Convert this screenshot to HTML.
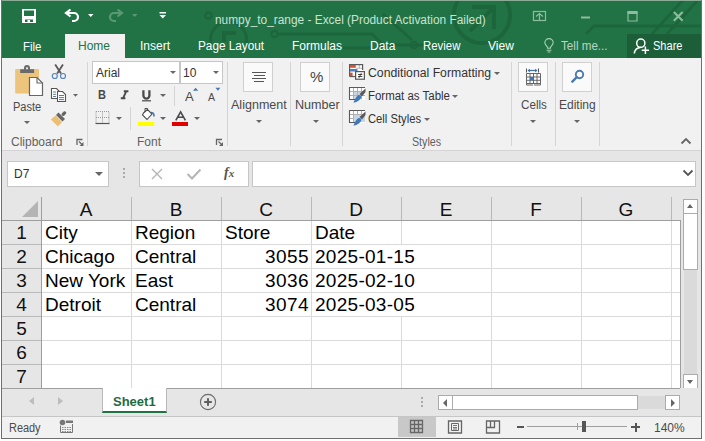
<!DOCTYPE html>
<html><head><meta charset="utf-8">
<style>
*{margin:0;padding:0;box-sizing:border-box}
html,body{width:705px;height:441px;overflow:hidden;background:#fff;font-family:"Liberation Sans",sans-serif;position:relative}
.a{position:absolute}
.tb{position:absolute;color:#fff;font-size:12px;white-space:nowrap;line-height:14px}
.rt{position:absolute;color:#4a4a4a;font-size:12px;white-space:nowrap;line-height:14px}
.sep{position:absolute;width:1px;background:#d4d4d4}
.c{position:absolute;font-size:19px;color:#000;white-space:nowrap;line-height:22px}
.hl{position:absolute;height:1px;background:#dadada}
.vl{position:absolute;width:1px;background:#dadada}
.hd{position:absolute;font-size:19px;color:#111;line-height:22px;text-align:center}
.dd{position:absolute;width:0;height:0;border-left:3px solid transparent;border-right:3px solid transparent;border-top:3px solid #666}
</style></head><body>

<!-- ===== Title bar ===== -->
<div class="a" style="left:1px;top:0;width:701px;height:58px;background:#217346"></div>
<svg class="a" style="left:0;top:0" width="702" height="58" viewBox="0 0 702 58">
  <g fill="none" stroke="#1d663c" stroke-width="3">
    <circle cx="208.5" cy="15.5" r="3.2" stroke-width="2.2"/>
    <path d="M211 44 A18 18 0 1 1 246 44" />
    <path d="M222 33 H236 M224 33 V42" stroke-width="4"/>
    <circle cx="274.5" cy="34" r="3.2" stroke-width="2.2"/>
    <path d="M278 34 H372 L383 45 H455"/>
    <path d="M343 48 H372"/>
    <circle cx="414" cy="45" r="3.2" stroke-width="2.2"/>
    <path d="M383 14 L412 40"/>
    <circle cx="482" cy="15" r="28" stroke-width="4"/>
    <path d="M472 7 H494 V29 M494 7 L470 31" stroke-width="4"/>
    <path d="M586 34 L594 26 H702"/>
    <path d="M652 34 L684 -1"/>
    <path d="M667 34 L699 -1"/>
  </g>
</svg>
<!-- QAT -->
<svg class="a" style="left:0;top:0" width="180" height="30" viewBox="0 0 180 30">
  <path d="M22 9 H36 V23 H22 Z M24 10.5 V16 H34 V10.5 Z M25 19.5 V22 H27.5 V20 H30 V22 H33 V19.5 Z" fill="#fff" fill-rule="evenodd"/>
  <path d="M70.5 9.5 L66 13 L70.5 16.5" fill="none" stroke="#fff" stroke-width="2.2" stroke-linejoin="miter"/>
  <path d="M66.5 13 H74 A4 4 0 0 1 74 21 H72" fill="none" stroke="#fff" stroke-width="2.2"/>
  <path d="M88 14 H93.5 L90.75 17 Z" fill="#fff"/>
  <path d="M117.5 9.5 L122 13 L117.5 16.5" fill="none" stroke="#5b9874" stroke-width="2.2"/>
  <path d="M121.5 13 H114 A4 4 0 0 0 114 21 H116" fill="none" stroke="#5b9874" stroke-width="2.2"/>
  <path d="M132 14 H137.5 L134.75 17 Z" fill="#5b9874"/>
  <path d="M159.5 12 H166 V13.5 H159.5 Z M159.5 15 H166 L162.75 18.5 Z" fill="#fff"/>
</svg>
<div class="tb" style="left:215px;top:12.5px;color:#c9e3d1;transform:scaleX(0.99);transform-origin:left">numpy_to_range - Excel (Product Activation Failed)</div>
<!-- window controls -->
<svg class="a" style="left:520px;top:0" width="181" height="30" viewBox="520 0 181 30">
  <g fill="none" stroke="#8fbc9f" stroke-width="1.2">
    <rect x="533.5" y="11.5" width="12" height="9"/>
    <path d="M536 16.5 L539.5 13.5 L543 16.5 M539.5 14 V20.5"/>
    <path d="M628 12 H637 V21 H628 Z"/>
  </g>
  <path d="M627.5 11 H637.5 V14 H627.5 Z" fill="#8fbc9f"/>
  <path d="M581 17.5 H590" stroke="#8fbc9f" stroke-width="2"/>
  <path d="M673.8 12 L682.6 20.8 M682.6 12 L673.8 20.8" stroke="#8fbc9f" stroke-width="2"/>
</svg>
<!-- tabs -->
<div class="a" style="left:65px;top:34px;width:60px;height:24px;background:#f1f1f1"></div>
<div class="tb" style="left:22.5px;top:40px;transform:scaleX(0.95);transform-origin:left">File</div>
<div class="tb" style="left:78px;top:39px;color:#217346">Home</div>
<div class="tb" style="left:140px;top:39px">Insert</div>
<div class="tb" style="left:198px;top:39px;transform:scaleX(0.98);transform-origin:left">Page Layout</div>
<div class="tb" style="left:292px;top:39px">Formulas</div>
<div class="tb" style="left:370px;top:39px">Data</div>
<div class="tb" style="left:423px;top:39px;transform:scaleX(0.95);transform-origin:left">Review</div>
<div class="tb" style="left:488px;top:39px">View</div>
<svg class="a" style="left:538px;top:34px" width="24" height="24" viewBox="538 34 24 24">
  <path d="M547.6 48.3 V47.2 C546.2 45.6 544.8 44.3 544.8 42.8 A4.2 4.2 0 0 1 553.2 42.8 C553.2 44.3 551.8 45.6 550.4 47.2 V48.3 Z" fill="none" stroke="#a8d0b5" stroke-width="1.1"/>
  <path d="M546.6 50.2 H551.4 M547.6 52 H550.4" stroke="#a8d0b5" stroke-width="1.1"/>
</svg>
<div class="tb" style="left:560.5px;top:39px;color:#b9d6c3;transform:scaleX(0.97);transform-origin:left">Tell me...</div>
<div class="a" style="left:627px;top:34px;width:74px;height:24px;background:#1b5e38"></div>
<svg class="a" style="left:627px;top:34px" width="26" height="24" viewBox="627 34 26 24">
  <circle cx="640.8" cy="43.2" r="4.1" fill="none" stroke="#fff" stroke-width="1.5"/>
  <path d="M634.3 53.5 C634.8 50 637 47.8 640.5 47.6" fill="none" stroke="#fff" stroke-width="1.5"/>
  <path d="M645.4 46.6 V54 M641.7 50.3 H649.1" stroke="#fff" stroke-width="1.5"/>
</svg>
<div class="tb" style="left:653px;top:39px;transform:scaleX(0.92);transform-origin:left">Share</div>

<!-- ===== Ribbon body ===== -->
<div class="a" style="left:2px;top:58px;width:699px;height:92px;background:#f1f1f1"></div>
<div class="a" style="left:2px;top:150px;width:699px;height:1px;background:#d4d4d4"></div>
<div class="sep" style="left:87px;top:62px;height:84px"></div>
<div class="sep" style="left:227px;top:62px;height:84px"></div>
<div class="sep" style="left:290px;top:62px;height:84px"></div>
<div class="sep" style="left:342px;top:62px;height:84px"></div>
<div class="sep" style="left:511px;top:62px;height:84px"></div>
<div class="sep" style="left:555px;top:62px;height:84px"></div>
<div class="sep" style="left:599px;top:62px;height:84px"></div>

<!-- Clipboard -->
<svg class="a" style="left:5px;top:60px" width="42" height="40" viewBox="5 60 42 40">
  <rect x="15.2" y="69" width="23.8" height="24.5" rx="0.8" fill="#ecc47c"/>
  <path d="M20.2 69.3 H24 V68 A3 3 0 0 1 30 68 V69.3 H34.1 V73 H20.2 Z" fill="#6a6a6a"/>
  <circle cx="27" cy="68.3" r="1.1" fill="#f0f0f0"/>
  <path d="M29.5 77.5 H37 L42.5 83 V95.5 H29.5 Z" fill="#fff" stroke="#666" stroke-width="1.2"/>
  <path d="M37 77.5 V83 H42.5" fill="none" stroke="#666" stroke-width="1.1"/>
</svg>
<div class="rt" style="left:13px;top:100px;transform:scaleX(0.92);transform-origin:left">Paste</div>
<div class="dd" style="left:24px;top:121px"></div>
<svg class="a" style="left:45px;top:60px" width="40" height="70" viewBox="45 60 40 70">
  <path d="M55.2 64.5 L61 73.5 M63 64.5 L57.2 73.5" stroke="#595959" stroke-width="1.8"/>
  <circle cx="54.8" cy="76" r="2.5" fill="none" stroke="#5784bc" stroke-width="1.2"/>
  <circle cx="63" cy="76" r="2.5" fill="none" stroke="#5784bc" stroke-width="1.2"/>
  <path d="M51.5 88.5 H56.5 L59.5 91.5 V98.5 H51.5 Z" fill="#fff" stroke="#555" stroke-width="1.1"/>
  <path d="M53 92 H56 M53 94.3 H56 M53 96.5 H56" stroke="#5a7fae" stroke-width="1"/>
  <path d="M57.5 91.5 H62.5 L65.5 94.5 V101.5 H57.5 Z" fill="#fff" stroke="#555" stroke-width="1.1"/>
  <path d="M59 95.5 H64 M59 97.6 H64 M59 99.6 H64" stroke="#4c79b0" stroke-width="1"/>
  <path d="M73 94 H78 L75.5 96.8 Z" fill="#666"/>
  <g transform="translate(60.5 117) rotate(-45)">
    <rect x="-1.8" y="-4.6" width="3.6" height="9.2" fill="#666"/>
    <rect x="2.3" y="-1.6" width="5" height="3.2" rx="1.2" fill="#666"/>
    <path d="M-2.4 -4.6 V4.6 L-8.6 5 V-5 Z" fill="#ebbf72"/>
  </g>
</svg>
<div class="rt" style="left:11px;top:135px;color:#616161">Clipboard</div>
<svg class="a" style="left:75px;top:138px" width="10" height="10" viewBox="75 138 10 10">
  <path d="M77 145 V139.5 H82.5" fill="none" stroke="#666" stroke-width="1.3"/>
  <path d="M79 141.5 L82 144.5" stroke="#666" stroke-width="1.3"/>
  <path d="M79.5 146 H83.5 V142 Z" fill="#666"/>
</svg>
<!-- Font -->
<div class="a" style="left:92px;top:61px;width:88px;height:23px;background:#fff;border:1px solid #c6c6c6"></div>
<div class="rt" style="left:96px;top:66px;color:#333">Arial</div>
<div class="dd" style="left:170px;top:71px"></div>
<div class="a" style="left:180px;top:61px;width:43px;height:23px;background:#fff;border:1px solid #c6c6c6"></div>
<div class="rt" style="left:183px;top:66px;color:#333">10</div>
<div class="dd" style="left:213px;top:71px"></div>
<div class="a" style="left:98px;top:88px;font-size:12px;font-weight:bold;color:#4a4a4a;line-height:14px;transform:scaleX(0.92);transform-origin:left">B</div>
<svg class="a" style="left:90px;top:84px" width="135" height="46" viewBox="90 84 135 46">
  <path d="M123.8 91.3 H128.4 M120.8 98.3 H125.4 M126.2 91.3 L123 98.3" fill="none" stroke="#4a4a4a" stroke-width="1.9"/>
  <path d="M143.4 90.3 V95.6 A3 3 0 0 0 149.4 95.6 V90.3" fill="none" stroke="#4a4a4a" stroke-width="2.3"/>
  <path d="M142 100.8 H151" stroke="#4a4a4a" stroke-width="1.2"/>
  <path d="M193 90.7 L195.6 87.8 L198.2 90.7 Z" fill="#3f78b8"/>
  <path d="M215.5 87.8 L217.9 90.7 L220.3 87.8 Z" fill="#3f78b8"/>
  <path d="M96 111.5 H109 V123 M96 111.5 V123 M102.5 111.5 V123 M96 117.5 H109" fill="none" stroke="#999" stroke-width="1" stroke-dasharray="1 1"/>
  <path d="M95.5 123.5 H109.5" stroke="#555" stroke-width="1.2"/>
  <path d="M143.5 113 L147.5 109.5 L152 114 L147 119.5 L142.5 115 Z" fill="#fff" stroke="#4a4a4a" stroke-width="1.1"/>
  <path d="M145 112 V108.5 H147.5 V111" fill="none" stroke="#4a4a4a" stroke-width="1"/>
  <path d="M151 112.5 C153 112.5 154.5 114 153.8 116.5" fill="none" stroke="#3f78b8" stroke-width="1.6"/>
  <rect x="138" y="122" width="16.2" height="4" fill="#ffff00"/>
  <path d="M175.8 120.4 L180.6 111.8 L185.4 120.4 M177.6 117.3 H183.6" fill="none" stroke="#4a4a4a" stroke-width="1.6"/>
  <rect x="172" y="122" width="16" height="4" fill="#e00000"/>
</svg>
<div class="dd" style="left:160px;top:94px"></div>
<div class="sep" style="left:174px;top:86px;height:20px"></div>
<div class="a" style="left:185px;top:88.5px;font-size:13px;color:#4a4a4a;line-height:15px">A</div>
<div class="a" style="left:208px;top:91px;font-size:10.5px;color:#4a4a4a;line-height:12px">A</div>
<div class="dd" style="left:116px;top:117px"></div>
<div class="sep" style="left:130px;top:107px;height:23px"></div>
<div class="dd" style="left:160px;top:117px"></div>
<div class="dd" style="left:194px;top:117px"></div>
<div class="rt" style="left:137px;top:135px;color:#616161">Font</div>
<svg class="a" style="left:214px;top:138px" width="10" height="10" viewBox="214 138 10 10">
  <path d="M216.5 145 V139.5 H222" fill="none" stroke="#666" stroke-width="1.3"/>
  <path d="M218.5 141.5 L221.5 144.5" stroke="#666" stroke-width="1.3"/>
  <path d="M219 146 H223 V142 Z" fill="#666"/>
</svg>

<!-- Alignment / Number -->
<div class="a" style="left:243px;top:62px;width:30px;height:30px;background:#fafafa;border:1px solid #d0d0d0"></div>
<svg class="a" style="left:243px;top:62px" width="30" height="30" viewBox="0 0 30 30">
  <path d="M9 10.5 H23 M11 13.5 H22 M9 16.5 H23 M11 19.5 H21" stroke="#555" stroke-width="1.1"/>
</svg>
<div class="rt" style="left:231px;top:98px;transform:scaleX(1.045);transform-origin:left">Alignment</div>
<div class="dd" style="left:256px;top:120px"></div>
<div class="a" style="left:300px;top:62px;width:30px;height:30px;background:#fafafa;border:1px solid #d0d0d0"></div>
<div class="a" style="left:310px;top:69px;font-size:15px;color:#444;line-height:16px">%</div>
<div class="rt" style="left:294.5px;top:98px;transform:scaleX(1.05);transform-origin:left">Number</div>
<div class="dd" style="left:313px;top:120px"></div>

<!-- Styles -->
<svg class="a" style="left:345px;top:60px" width="25" height="70" viewBox="345 60 25 70">
  <!-- CF -->
  <rect x="349" y="64" width="14" height="13" fill="#fff"/>
  <path d="M356 68.2 H363 M359.3 64.5 V68.2" stroke="#b5b5b5" stroke-width="1"/>
  <path d="M349.6 76.5 V64.6 H362.6 V70" fill="none" stroke="#5a5a5a" stroke-width="1.2"/>
  <path d="M349.6 76.5 H355" stroke="#5a5a5a" stroke-width="1.2"/>
  <rect x="350" y="65" width="5.8" height="2.8" fill="#d9532c"/>
  <rect x="350" y="69" width="7.5" height="2.5" fill="#4a7fc0"/>
  <rect x="350" y="72.7" width="2.6" height="3.3" fill="#d9532c"/>
  <rect x="355.6" y="71.6" width="8.8" height="7.6" fill="#fff" stroke="#555" stroke-width="1.2"/>
  <path d="M358 74.5 H362.3 M358 76.5 H362.3" stroke="#333" stroke-width="0.9"/>
  <path d="M361.3 73.2 L359 77.8" stroke="#333" stroke-width="0.9"/>
  <!-- FaT -->
  <rect x="349" y="87" width="16" height="13" fill="#fff"/>
  <rect x="354" y="92" width="7" height="7" fill="#cdd6df"/>
  <path d="M353.5 87.5 V99.5 M357.5 87.5 V99.5 M361.5 87.5 V99.5 M349.5 91.5 H365 M349.5 95.5 H365" stroke="#b0b0b0" stroke-width="1"/>
  <path d="M365 87.5 H349.5 V99.5 H355" fill="none" stroke="#5a5a5a" stroke-width="1.1"/>
  <path d="M365.5 88.5 V92 L362 96.5 L359.5 94 Z" fill="#5a5a5a"/>
  <path d="M358.6 95 C360 94.8 361.6 96 361.3 97.6 C360.3 100 357.3 102.4 353.5 102.8 C354.3 100 356.5 96 358.6 95 Z" fill="#3f78b8"/>
  <!-- CS -->
  <rect x="349" y="110" width="16" height="13" fill="#fff"/>
  <rect x="354" y="115" width="11" height="7" fill="#c5d5e8"/>
  <path d="M353.5 110.5 V122.5 M357.5 110.5 V114.5 M361.5 110.5 V114.5 M349.5 114.5 H365 M349.5 118.5 H353.5" stroke="#b0b0b0" stroke-width="1"/>
  <path d="M365 110.5 H349.5 V122.5 H356" fill="none" stroke="#5a5a5a" stroke-width="1.1"/>
  <path d="M365.5 111.5 V115 L362 119.5 L359.5 117 Z" fill="#5a5a5a"/>
  <path d="M358.6 118 C360 117.8 361.6 119 361.3 120.6 C360.3 123 357.3 125.4 353.5 125.8 C354.3 123 356.5 119 358.6 118 Z" fill="#3f78b8"/>
</svg>
<div class="rt" style="left:368px;top:66px;color:#333;transform:scaleX(1.02);transform-origin:left">Conditional Formatting</div>
<div class="dd" style="left:494px;top:72px"></div>
<div class="rt" style="left:368px;top:89px;color:#333;transform:scaleX(0.955);transform-origin:left">Format as Table</div>
<div class="dd" style="left:452px;top:95px"></div>
<div class="rt" style="left:368px;top:112px;color:#333;transform:scaleX(0.935);transform-origin:left">Cell Styles</div>
<div class="dd" style="left:424px;top:118px"></div>
<div class="rt" style="left:412px;top:135px;color:#616161;transform:scaleX(0.89);transform-origin:left">Styles</div>

<!-- Cells / Editing -->
<div class="a" style="left:518px;top:62px;width:30px;height:30px;background:#fafafa;border:1px solid #d0d0d0"></div>
<svg class="a" style="left:515px;top:60px" width="40" height="35" viewBox="515 60 40 35">
  <path d="M526.5 68.5 V72.5 M538.5 68.5 V72.5" stroke="#555" stroke-width="1"/>
  <path d="M528 70.5 H537" stroke="#3f6fa8" stroke-width="1.2"/>
  <path d="M527.5 70.5 L530 68.8 V72.2 Z M537.5 70.5 L535 68.8 V72.2 Z" fill="#3f6fa8"/>
  <path d="M526.5 73.5 H540.5 V83.5 H526.5 Z M526.5 77 H540.5 M526.5 80.3 H540.5 M530 73.5 V83.5 M533.5 73.5 V83.5 M537 73.5 V83.5" fill="#fff" stroke="#666" stroke-width="1"/>
  <rect x="530" y="77" width="3.5" height="3.3" fill="#3f78b8"/>
  <path d="M526.5 83.5 V85 H533 M534 85 H540.5 V83.5" fill="none" stroke="#666" stroke-width="1"/>
</svg>
<div class="rt" style="left:521px;top:98px;transform:scaleX(0.97);transform-origin:left">Cells</div>
<div class="dd" style="left:530px;top:120px"></div>
<div class="a" style="left:562px;top:62px;width:30px;height:30px;background:#fafafa;border:1px solid #d0d0d0"></div>
<svg class="a" style="left:560px;top:60px" width="35" height="35" viewBox="560 60 35 35">
  <circle cx="579.5" cy="74.5" r="3.7" fill="none" stroke="#4a7ab0" stroke-width="1.9"/>
  <path d="M576.8 77.2 L572.3 81.7" stroke="#4a7ab0" stroke-width="2.4" stroke-linecap="round"/>
</svg>
<div class="rt" style="left:559px;top:98px">Editing</div>
<div class="dd" style="left:574px;top:120px"></div>
<svg class="a" style="left:680px;top:137px" width="12" height="8" viewBox="0 0 12 8">
  <path d="M1.5 6.5 L6 2 L10.5 6.5" fill="none" stroke="#666" stroke-width="1.8"/>
</svg>

<!-- ===== Formula bar ===== -->
<div class="a" style="left:2px;top:151px;width:699px;height:46px;background:#e6e6e6"></div>
<div class="a" style="left:7px;top:161px;width:102px;height:26px;background:#fff;border:1px solid #c6c6c6"></div>
<div class="rt" style="left:14px;top:167px;color:#333">D7</div>
<div class="dd" style="left:95px;top:172px;border-left-width:4px;border-right-width:4px;border-top-width:4px"></div>
<div class="a" style="left:123px;top:168px;width:2px;height:2px;background:#aaa"></div>
<div class="a" style="left:123px;top:172px;width:2px;height:2px;background:#aaa"></div>
<div class="a" style="left:123px;top:176px;width:2px;height:2px;background:#aaa"></div>
<div class="a" style="left:139px;top:161px;width:110px;height:26px;background:#fff;border:1px solid #c6c6c6"></div>
<svg class="a" style="left:150px;top:167px" width="14" height="14" viewBox="0 0 14 14">
  <path d="M2 2 L12 12 M12 2 L2 12" stroke="#b5b5b5" stroke-width="1.4"/>
</svg>
<svg class="a" style="left:186px;top:167px" width="16" height="14" viewBox="0 0 16 14">
  <path d="M1.5 7 L6 11.5 L14.5 2.5" fill="none" stroke="#b5b5b5" stroke-width="2"/>
</svg>
<div class="a" style="left:224px;top:165px;font-size:14px;font-style:italic;font-weight:bold;color:#555;line-height:16px;font-family:'Liberation Serif',serif">f<span style="font-size:11px;margin-left:0px">x</span></div>
<div class="a" style="left:252px;top:161px;width:444px;height:26px;background:#fff;border:1px solid #c6c6c6"></div>
<svg class="a" style="left:682px;top:169px" width="12" height="8" viewBox="0 0 12 8">
  <path d="M1.5 1.5 L6 6 L10.5 1.5" fill="none" stroke="#555" stroke-width="1.8"/>
</svg>

<!-- ===== Grid ===== -->
<div class="a" style="left:2px;top:197px;width:679px;height:191px;background:#fff"></div>
<div class="a" style="left:2px;top:197px;width:679px;height:23px;background:#e6e6e6"></div>
<div class="a" style="left:2px;top:197px;width:39px;height:191px;background:#e6e6e6"></div>
<svg class="a" style="left:22px;top:201px" width="17" height="16" viewBox="0 0 17 16">
  <path d="M16 0 V16 H0 Z" fill="#b4b4b4"/>
</svg>
<!-- gridlines horizontal -->
<div class="hl" style="left:41px;top:244px;width:639px"></div>
<div class="hl" style="left:41px;top:268px;width:639px"></div>
<div class="hl" style="left:41px;top:292px;width:639px"></div>
<div class="hl" style="left:41px;top:316px;width:639px"></div>
<div class="hl" style="left:41px;top:340px;width:639px"></div>
<div class="hl" style="left:41px;top:364px;width:639px"></div>
<!-- gridlines vertical -->
<div class="vl" style="left:131px;top:220px;height:168px"></div>
<div class="vl" style="left:221px;top:220px;height:168px"></div>
<div class="vl" style="left:311px;top:220px;height:168px"></div>
<div class="vl" style="left:401px;top:220px;height:24px"></div>
<div class="vl" style="left:401px;top:316px;height:72px"></div>
<div class="vl" style="left:491px;top:220px;height:168px"></div>
<div class="vl" style="left:581px;top:220px;height:168px"></div>
<div class="vl" style="left:671px;top:220px;height:168px"></div>
<!-- header lines -->
<div class="a" style="left:2px;top:220px;width:678px;height:1px;background:#9e9e9e"></div>
<div class="a" style="left:41px;top:197px;width:1px;height:191px;background:#9e9e9e"></div>
<div class="a" style="left:131px;top:197px;width:1px;height:23px;background:#b9b9b9"></div>
<div class="a" style="left:221px;top:197px;width:1px;height:23px;background:#b9b9b9"></div>
<div class="a" style="left:311px;top:197px;width:1px;height:23px;background:#b9b9b9"></div>
<div class="a" style="left:401px;top:197px;width:1px;height:23px;background:#b9b9b9"></div>
<div class="a" style="left:491px;top:197px;width:1px;height:23px;background:#b9b9b9"></div>
<div class="a" style="left:581px;top:197px;width:1px;height:23px;background:#b9b9b9"></div>
<div class="a" style="left:671px;top:197px;width:1px;height:23px;background:#b9b9b9"></div>
<div class="a" style="left:2px;top:244px;width:39px;height:1px;background:#b9b9b9"></div>
<div class="a" style="left:2px;top:268px;width:39px;height:1px;background:#b9b9b9"></div>
<div class="a" style="left:2px;top:292px;width:39px;height:1px;background:#b9b9b9"></div>
<div class="a" style="left:2px;top:316px;width:39px;height:1px;background:#b9b9b9"></div>
<div class="a" style="left:2px;top:340px;width:39px;height:1px;background:#b9b9b9"></div>
<div class="a" style="left:2px;top:364px;width:39px;height:1px;background:#b9b9b9"></div>
<div class="a" style="left:680px;top:220px;width:1px;height:168px;background:#9e9e9e"></div>
<!-- column headers -->
<div class="hd" style="left:41px;top:199px;width:90px">A</div>
<div class="hd" style="left:131px;top:199px;width:90px">B</div>
<div class="hd" style="left:221px;top:199px;width:90px">C</div>
<div class="hd" style="left:311px;top:199px;width:90px">D</div>
<div class="hd" style="left:401px;top:199px;width:90px">E</div>
<div class="hd" style="left:491px;top:199px;width:90px">F</div>
<div class="hd" style="left:581px;top:199px;width:90px">G</div>
<!-- row headers -->
<div class="hd" style="left:2px;top:222px;width:39px">1</div>
<div class="hd" style="left:2px;top:246px;width:39px">2</div>
<div class="hd" style="left:2px;top:270px;width:39px">3</div>
<div class="hd" style="left:2px;top:294px;width:39px">4</div>
<div class="hd" style="left:2px;top:318px;width:39px">5</div>
<div class="hd" style="left:2px;top:342px;width:39px">6</div>
<div class="hd" style="left:2px;top:366px;width:39px">7</div>
<!-- cells -->
<div class="c" style="left:45px;top:222px">City</div>
<div class="c" style="left:135px;top:222px">Region</div>
<div class="c" style="left:225px;top:222px">Store</div>
<div class="c" style="left:315px;top:222px">Date</div>
<div class="c" style="left:45px;top:246px">Chicago</div>
<div class="c" style="left:135px;top:246px">Central</div>
<div class="c" style="left:221px;top:246px;width:88px;text-align:right;letter-spacing:0.45px">3055</div>
<div class="c" style="left:315px;top:246px;letter-spacing:0.28px">2025-01-15</div>
<div class="c" style="left:45px;top:270px">New York</div>
<div class="c" style="left:135px;top:270px">East</div>
<div class="c" style="left:221px;top:270px;width:88px;text-align:right;letter-spacing:0.45px">3036</div>
<div class="c" style="left:315px;top:270px;letter-spacing:0.28px">2025-02-10</div>
<div class="c" style="left:45px;top:294px">Detroit</div>
<div class="c" style="left:135px;top:294px">Central</div>
<div class="c" style="left:221px;top:294px;width:88px;text-align:right;letter-spacing:0.45px">3074</div>
<div class="c" style="left:315px;top:294px;letter-spacing:0.28px">2025-03-05</div>

<!-- vertical scrollbar -->
<div class="a" style="left:681px;top:197px;width:20px;height:191px;background:#e6e6e6"></div>
<div class="a" style="left:684px;top:213px;width:13px;height:162px;background:#dadada"></div>
<div class="a" style="left:683px;top:199px;width:15px;height:15px;background:#fff;border:1px solid #ababab"></div>
<div class="a" style="left:687px;top:204px;width:0;height:0;border-left:3.5px solid transparent;border-right:3.5px solid transparent;border-bottom:4px solid #666"></div>
<div class="a" style="left:683px;top:213px;width:15px;height:57px;background:#fff;border:1px solid #ababab"></div>
<div class="a" style="left:683px;top:374px;width:15px;height:15px;background:#fff;border:1px solid #ababab"></div>
<div class="a" style="left:687px;top:380px;width:0;height:0;border-left:3.5px solid transparent;border-right:3.5px solid transparent;border-top:4px solid #666"></div>

<!-- ===== sheet tab bar ===== -->
<div class="a" style="left:2px;top:388px;width:699px;height:28px;background:#e6e6e6"></div>
<div class="a" style="left:2px;top:388px;width:678px;height:1px;background:#9e9e9e"></div>
<div class="a" style="left:29px;top:397px;width:0;height:0;border-top:4px solid transparent;border-bottom:4px solid transparent;border-right:5px solid #bdbdbd"></div>
<div class="a" style="left:58px;top:397px;width:0;height:0;border-top:4px solid transparent;border-bottom:4px solid transparent;border-left:5px solid #bdbdbd"></div>
<div class="a" style="left:102px;top:388px;width:65px;height:25px;background:#fff;border-left:1px solid #b9b9b9;border-right:1px solid #b9b9b9;border-bottom:2px solid #217346"></div>
<div class="a" style="left:113px;top:394px;font-size:13px;font-weight:bold;color:#1f6b41;line-height:15px">Sheet1</div>
<svg class="a" style="left:198px;top:392px" width="20" height="20" viewBox="0 0 20 20">
  <circle cx="10" cy="10" r="7.6" fill="none" stroke="#6a6a6a" stroke-width="1.1"/>
  <path d="M10 6.2 V13.8 M6.2 10 H13.8" stroke="#5e5e5e" stroke-width="2"/>
</svg>
<div class="a" style="left:421px;top:397px;width:2px;height:2px;background:#aaa"></div>
<div class="a" style="left:421px;top:401px;width:2px;height:2px;background:#aaa"></div>
<div class="a" style="left:421px;top:405px;width:2px;height:2px;background:#aaa"></div>
<!-- h scrollbar -->
<div class="a" style="left:452px;top:396px;width:214px;height:13px;background:#dadada"></div>
<div class="a" style="left:438px;top:395px;width:15px;height:15px;background:#fff;border:1px solid #ababab"></div>
<div class="a" style="left:443px;top:398.5px;width:0;height:0;border-top:4px solid transparent;border-bottom:4px solid transparent;border-right:4px solid #666"></div>
<div class="a" style="left:452px;top:395px;width:186px;height:15px;background:#fff;border:1px solid #ababab"></div>
<div class="a" style="left:665px;top:395px;width:15px;height:15px;background:#fff;border:1px solid #ababab"></div>
<div class="a" style="left:671px;top:398.5px;width:0;height:0;border-top:4px solid transparent;border-bottom:4px solid transparent;border-left:4px solid #666"></div>

<!-- ===== status bar ===== -->
<div class="a" style="left:2px;top:416px;width:699px;height:1px;background:#c6c6c6"></div>
<div class="a" style="left:2px;top:417px;width:699px;height:21px;background:#f1f1f1"></div>
<div class="rt" style="left:9px;top:421px;transform:scaleX(0.91);transform-origin:left">Ready</div>
<svg class="a" style="left:59px;top:419px" width="15" height="15" viewBox="0 0 15 15">
  <circle cx="3.5" cy="3.5" r="2.8" fill="#777"/>
  <path d="M7 1.5 H14 V4 H7 Z" fill="#777"/>
  <path d="M1.5 6.5 V13.5 H13.5 V5" fill="none" stroke="#777"/>
  <path d="M3 8.5 H12.5 M3 10.5 H12.5 M3 12.5 H12.5" stroke="#888" stroke-dasharray="1.5 1"/>
</svg>
<div class="a" style="left:398px;top:417px;width:38px;height:20px;background:#c8c8c8"></div>
<svg class="a" style="left:409px;top:419px" width="16" height="16" viewBox="0 0 16 16">
  <path d="M1.5 1.5 H13.5 V13.5 H1.5 Z M1.5 5.5 H13.5 M1.5 9.5 H13.5 M5.5 1.5 V13.5 M9.5 1.5 V13.5" fill="none" stroke="#666" stroke-width="1.3"/>
</svg>
<svg class="a" style="left:440px;top:414px" width="70" height="24" viewBox="440 414 70 24">
  <path d="M448.5 421 H461.5 V433 H448.5 Z" fill="none" stroke="#666" stroke-width="1.3"/>
  <path d="M451.5 423.5 H458.5 V430.5 H451.5 Z" fill="none" stroke="#666" stroke-width="1"/>
  <path d="M453 425.5 H457 M453 427.5 H457 M453 429 H457" stroke="#666" stroke-width="0.9"/>
  <path d="M486.5 421 H499.5 V433 H486.5 Z" fill="none" stroke="#666" stroke-width="1.3"/>
  <path d="M486.5 427.5 H494.5 V421 M490.5 421 V427.5" fill="none" stroke="#666" stroke-width="1.3"/>
</svg>
<div class="a" style="left:517px;top:426px;width:7px;height:2px;background:#555"></div>
<div class="a" style="left:527px;top:426px;width:100px;height:1px;background:#9e9e9e"></div>
<div class="a" style="left:577px;top:423px;width:1px;height:7px;background:#9e9e9e"></div>
<div class="a" style="left:582px;top:421px;width:4px;height:11px;background:#555"></div>
<div class="a" style="left:631px;top:426px;width:9px;height:2px;background:#555"></div>
<div class="a" style="left:634.5px;top:422.5px;width:2px;height:9px;background:#555"></div>
<div class="rt" style="left:654px;top:421px">140%</div>

<!-- ===== window border ===== -->
<div class="a" style="left:1px;top:0;width:701px;height:1px;background:#8aab96"></div>
<div class="a" style="left:1px;top:0;width:1px;height:439px;background:#6f6f6f"></div>
<div class="a" style="left:701px;top:0;width:1px;height:439px;background:#6f6f6f"></div>
<div class="a" style="left:1px;top:438px;width:701px;height:1px;background:#6f6f6f"></div>
</body></html>
